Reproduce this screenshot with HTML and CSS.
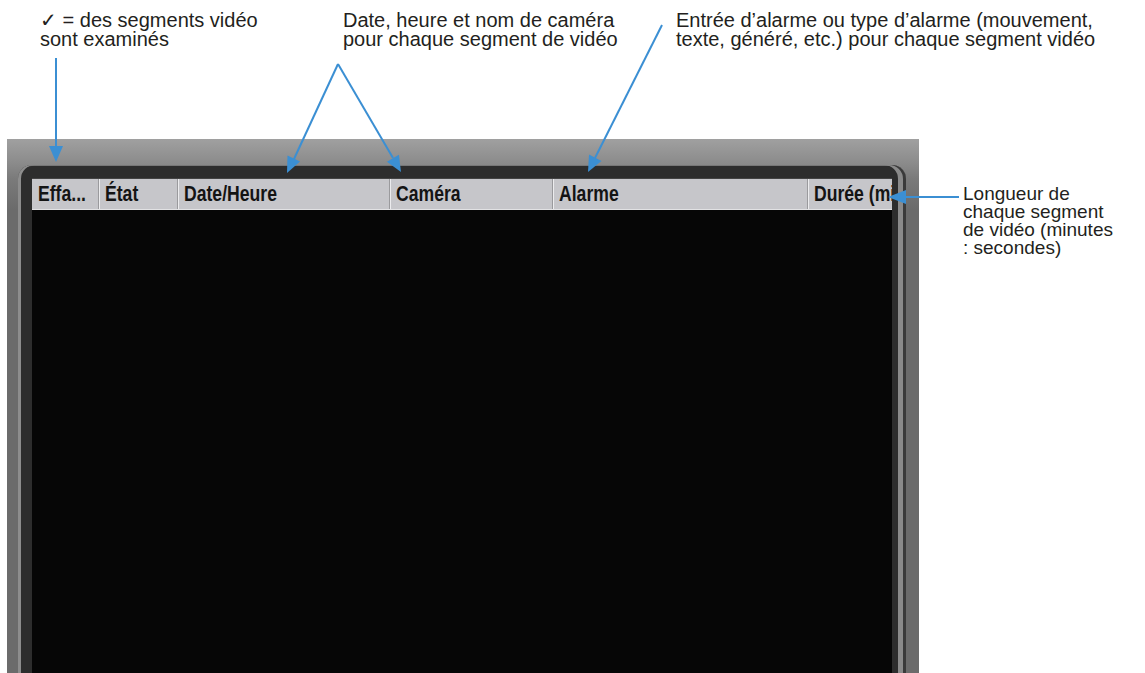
FILE: index.html
```html
<!DOCTYPE html>
<html lang="fr">
<head>
  <meta charset="UTF-8">
  <meta name="viewport" content="width=device-width, initial-scale=1.0">
  <title>Segments vidéo</title>
  <link rel="stylesheet" href="styles.css">
</head>
<body>
  <div class="page">
    <div class="notes">
      <p class="note note-check">✓ = des segments vidéo<br>sont examinés</p>
      <p class="note note-date">Date, heure et nom de caméra<br>pour chaque segment de vidéo</p>
      <p class="note note-alarm">Entrée d’alarme ou type d’alarme (mouvement,<br>texte, généré, etc.) pour chaque segment vidéo</p>
    </div>
    <div class="main">
      <div class="panel">
        <div class="bezel">
          <div class="list-head">
            <div class="col"><span>Effa...</span></div>
            <div class="col"><span>État</span></div>
            <div class="col"><span>Date/Heure</span></div>
            <div class="col"><span>Caméra</span></div>
            <div class="col"><span>Alarme</span></div>
            <div class="col"><span>Durée (minutes)</span></div>
          </div>
          <div class="list-body"></div>
        </div>
      </div>
      <p class="note note-length">Longueur de<br>chaque segment<br>de vidéo (minutes<br>: secondes)</p>
    </div>

    <!-- callout arrows -->
    <svg class="callouts" width="1145" height="673" viewBox="0 0 1145 673">
      <g stroke="#3b8fd3" stroke-width="2" fill="none">
        <line x1="56" y1="58" x2="56" y2="150"/>
        <line x1="338" y1="64" x2="294" y2="159"/>
        <line x1="338" y1="64" x2="393" y2="158"/>
        <line x1="662" y1="25" x2="595" y2="158"/>
        <line x1="959" y1="197" x2="904" y2="197"/>
      </g>
      <g fill="#3b8fd3">
        <polygon points="49,146 63,146 56,162"/>
        <polygon points="300.1,161.5 287.5,155.5 287,173"/>
        <polygon points="398.9,154.7 386.9,161.7 401,172"/>
        <polygon points="601.5,160.9 589,154.6 588,172"/>
        <polygon points="906,190 906,204 888,197"/>
      </g>
    </svg>
  </div>
</body>
</html>
```

FILE: styles.css
```css
/* page */
body {
  margin: 0;
  background: #fff;
  font-family: "Liberation Sans", Arial, sans-serif;
}
.page {
  position: relative;
  width: 1145px;
  height: 673px;
  overflow: hidden;
}

/* annotations */
.note {
  margin: 0;
  font-size: 20px;
  line-height: 19px;
  color: #231f20;
}
.notes {
  display: flex;
  height: 139px;
  padding: 11px 0 0 40px;
  box-sizing: border-box;
}
.note-check {
  width: 303px;
}
.note-date {
  width: 333px;
}
.note-length {
  margin: 46px 0 0 44px;
  font-size: 19px;
  line-height: 18px;
}

/* dvr panel */
.main {
  display: flex;
  height: 534px;
}
.panel {
  display: flex;
  width: 912px;
  margin-left: 7px;
  padding: 26px 13px 0 11px;
  box-sizing: border-box;
  background: linear-gradient(to bottom, #a0a0a0 0, #8b8b8b 24px, #7a7a7a 40px, #6b6b6b 70px);
}
.bezel {
  flex: 1;
  display: flex;
  flex-direction: column;
  padding: 13px 14px 0 14px;
  background: #2d2d2d;
  border-radius: 14px 14px 0 0;
  box-shadow: inset 3px 0 0 #8d8d8d, inset -3px 0 0 #3a3a3a, inset -8px 0 0 #8a8a8a, inset 0 1px 0 #777;
}
.list-head {
  display: grid;
  grid-template-columns: 67px 79px 212px 163px 255px 84px;
  height: 32px;
  box-sizing: border-box;
  background: #c6c6ca;
  border-top: 1px solid #444;
  border-bottom: 1px solid #e2e2e4;
}
.col {
  padding-left: 6px;
  overflow: hidden;
  white-space: nowrap;
  font-family: "Liberation Sans", Arial, sans-serif;
  font-weight: bold;
  font-size: 22px;
  line-height: 30px;
  color: #141414;
  border-right: 1px solid #9a9a9d;
  box-shadow: inset 1px 0 0 #ececee;
}
.col span {
  display: inline-block;
  transform: scaleX(0.8);
  transform-origin: left center;
}
.col:first-child {
  box-shadow: none;
}
.col:last-child {
  border-right: none;
}
.list-body {
  flex: 1;
  background: #060606;
}

/* arrows */
.callouts {
  position: absolute;
  top: 0;
  left: 0;
  pointer-events: none;
}
```
